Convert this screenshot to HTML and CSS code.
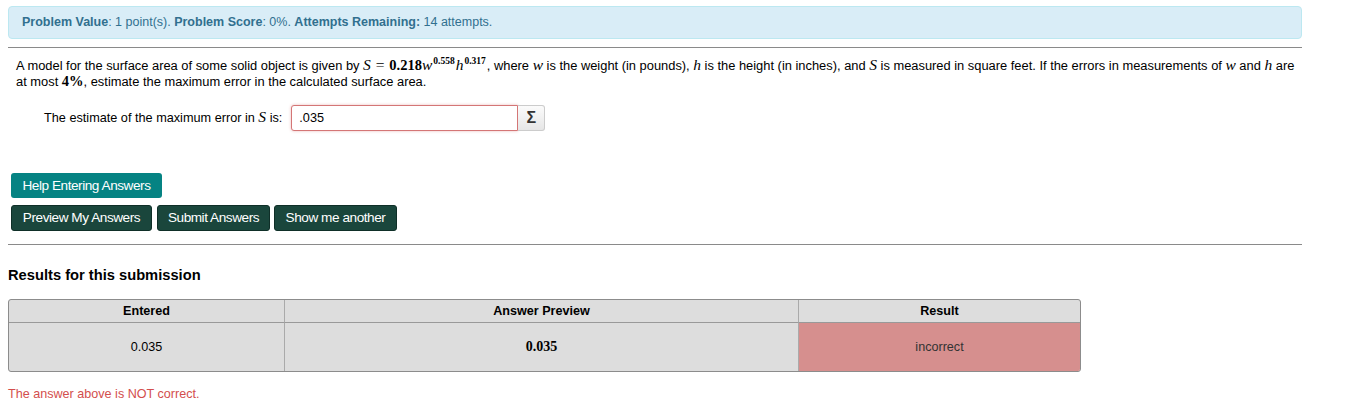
FILE: index.html
```html
<!DOCTYPE html>
<html>
<head>
<meta charset="utf-8">
<link rel="stylesheet" href="styles.css">
</head>
<body>
<div class="page">
  <div class="alert-info">
    <b>Problem Value</b>: 1 point(s). <b>Problem Score</b>: 0%. <b>Attempts Remaining:</b> 14 attempts.
  </div>
  <hr class="rule">
  <div class="problem">
    <p class="question">A model for the surface area of some solid object is given by <span class="math"><i>S</i> <span class="op">=</span> <span class="num">0.218</span><i>w</i><sup>0.558</sup><i>h</i><sup>0.317</sup></span>, where <span class="math"><i>w</i></span> is the weight (in pounds), <span class="math"><i>h</i></span> is the height (in inches), and <span class="math"><i>S</i></span> is measured in square feet. If the errors in measurements of <span class="math"><i>w</i></span> and <span class="math"><i>h</i></span> are<br>at most <span class="math"><span class="num">4%</span></span>, estimate the maximum error in the calculated surface area.</p>
    <div class="answer-row">
      <span class="label">The estimate of the maximum error in <span class="math"><i>S</i></span> is:</span>
      <span class="input-group">
        <span class="answer-input">.035</span>
        <span class="sigma">Σ</span>
      </span>
    </div>
  </div>
  <div class="buttons">
    <div class="btn-row"><span class="btn btn-help">Help Entering Answers</span></div>
    <div class="btn-row">
      <span class="btn btn-dark w-preview">Preview My Answers</span>
      <span class="btn btn-dark w-submit">Submit Answers</span>
      <span class="btn btn-dark w-show">Show me another</span>
    </div>
  </div>
  <hr class="rule rule2">
  <h3 class="results-title">Results for this submission</h3>
  <table class="results">
    <thead>
      <tr><th class="c1">Entered</th><th class="c2">Answer Preview</th><th class="c3">Result</th></tr>
    </thead>
    <tbody>
      <tr><td class="c1">0.035</td><td class="c2 preview">0.035</td><td class="c3 incorrect">incorrect</td></tr>
    </tbody>
  </table>
  <p class="not-correct">The answer above is NOT correct.</p>
</div>
</body>
</html>
```

FILE: styles.css
```css
html, body {
  margin: 0;
  padding: 0;
  background: #ffffff;
}
body {
  font-family: "Liberation Sans", Arial, sans-serif;
  font-size: 12.6px;
  color: #000;
}
.page {
  width: 1294px;
  padding: 6px 0 0 8px;
}
.alert-info {
  box-sizing: border-box;
  height: 33px;
  line-height: 31px;
  padding: 0 13px;
  background: #d9edf7;
  border: 1px solid #bce8f1;
  border-radius: 4px;
  color: #31708f;
  font-size: 12.5px;
}
.alert-info b {
  font-weight: bold;
}
.rule {
  margin: 8px 0 0 0;
  height: 0;
  border: 0;
  border-top: 1px solid #8a8a8a;
}
.problem {
  padding: 0 0 0 8px;
}
.question {
  margin: 10px 0 0 0;
  line-height: 16px;
  font-size: 12.88px;
  white-space: nowrap;
}
.math {
  font-family: "Liberation Serif", "DejaVu Serif", serif;
  font-size: 15.5px;
  white-space: nowrap;
  line-height: 0;
}
.math i {
  font-style: italic;
}
.math .num {
  font-weight: bold;
  font-size: 14.5px;
}
.math .op {
  padding: 0 1px;
}
.math sup {
  font-size: 9.5px;
  font-weight: bold;
  vertical-align: 6px;
  line-height: 0;
  margin: 0 1px 0 1px;
}
.answer-row {
  display: flex;
  align-items: center;
  margin: 15px 0 0 28px;
  height: 26px;
  font-size: 12.7px;
}
.label {
  margin-right: 9px;
}
.input-group {
  display: flex;
  height: 26px;
}
.answer-input {
  box-sizing: border-box;
  width: 227px;
  height: 26px;
  line-height: 24px;
  padding: 0 7px;
  border: 1px solid #d47676;
  border-radius: 3px 0 0 3px;
  box-shadow: 0 0 3px rgba(210, 100, 100, 0.45);
  background: #fff;
}
.sigma {
  box-sizing: border-box;
  width: 27px;
  height: 26px;
  line-height: 24px;
  text-align: center;
  border: 1px solid #cccccc;
  border-left: 0;
  border-radius: 0 3px 3px 0;
  background: linear-gradient(#fbfbfb, #e6e6e6);
  font-weight: bold;
  font-size: 16px;
  color: #333;
}
.buttons {
  margin: 42px 0 0 3px;
  display: flex;
  flex-direction: column;
  gap: 7px;
}
.btn-row {
  display: flex;
  gap: 5px;
}
.btn {
  box-sizing: border-box;
  height: 26px;
  line-height: 26px;
  text-align: center;
  color: #ffffff;
  border-radius: 3px;
  font-size: 13.6px;
  letter-spacing: -0.45px;
}
.btn-help {
  width: 151px;
  height: 25px;
  line-height: 25px;
  background: #058383;
}
.btn-dark {
  background: #1a463c;
  border: 1px solid #0f2f28;
  line-height: 24px;
}
.w-preview { width: 141px; }
.w-submit { width: 113px; }
.w-show { width: 123px; margin-left: -1px; }
.rule2 {
  margin-top: 13px;
}
.results-title {
  margin: 22px 0 0 0;
  font-size: 14.7px;
  line-height: 16px;
  font-weight: bold;
}
.results {
  margin-top: 16px;
  width: 1073px;
  border-collapse: separate;
  border-spacing: 0;
  border: 1px solid #8c8c8c;
  border-radius: 3px;
  background: #dddddd;
}
.results th, .results td {
  text-align: center;
  padding: 0;
  font-size: 12.6px;
}
.results th {
  height: 22px;
  font-weight: bold;
  border-bottom: 1px solid #999;
}
.results td {
  height: 48px;
}
.results .c1 { width: 275px; border-right: 1px solid #aaa; }
.results .c2 { width: 513px; border-right: 1px solid #aaa; }
.results .c3 { width: auto; }
.results .preview {
  font-family: "Liberation Serif", "DejaVu Serif", serif;
  font-weight: bold;
  font-size: 14px;
}
.results .incorrect {
  background: #d68f8e;
  color: #333;
  border-bottom-right-radius: 2px;
}
.not-correct {
  margin: 14px 0 0 0;
  line-height: 16px;
  color: #d34e4d;
}
```
